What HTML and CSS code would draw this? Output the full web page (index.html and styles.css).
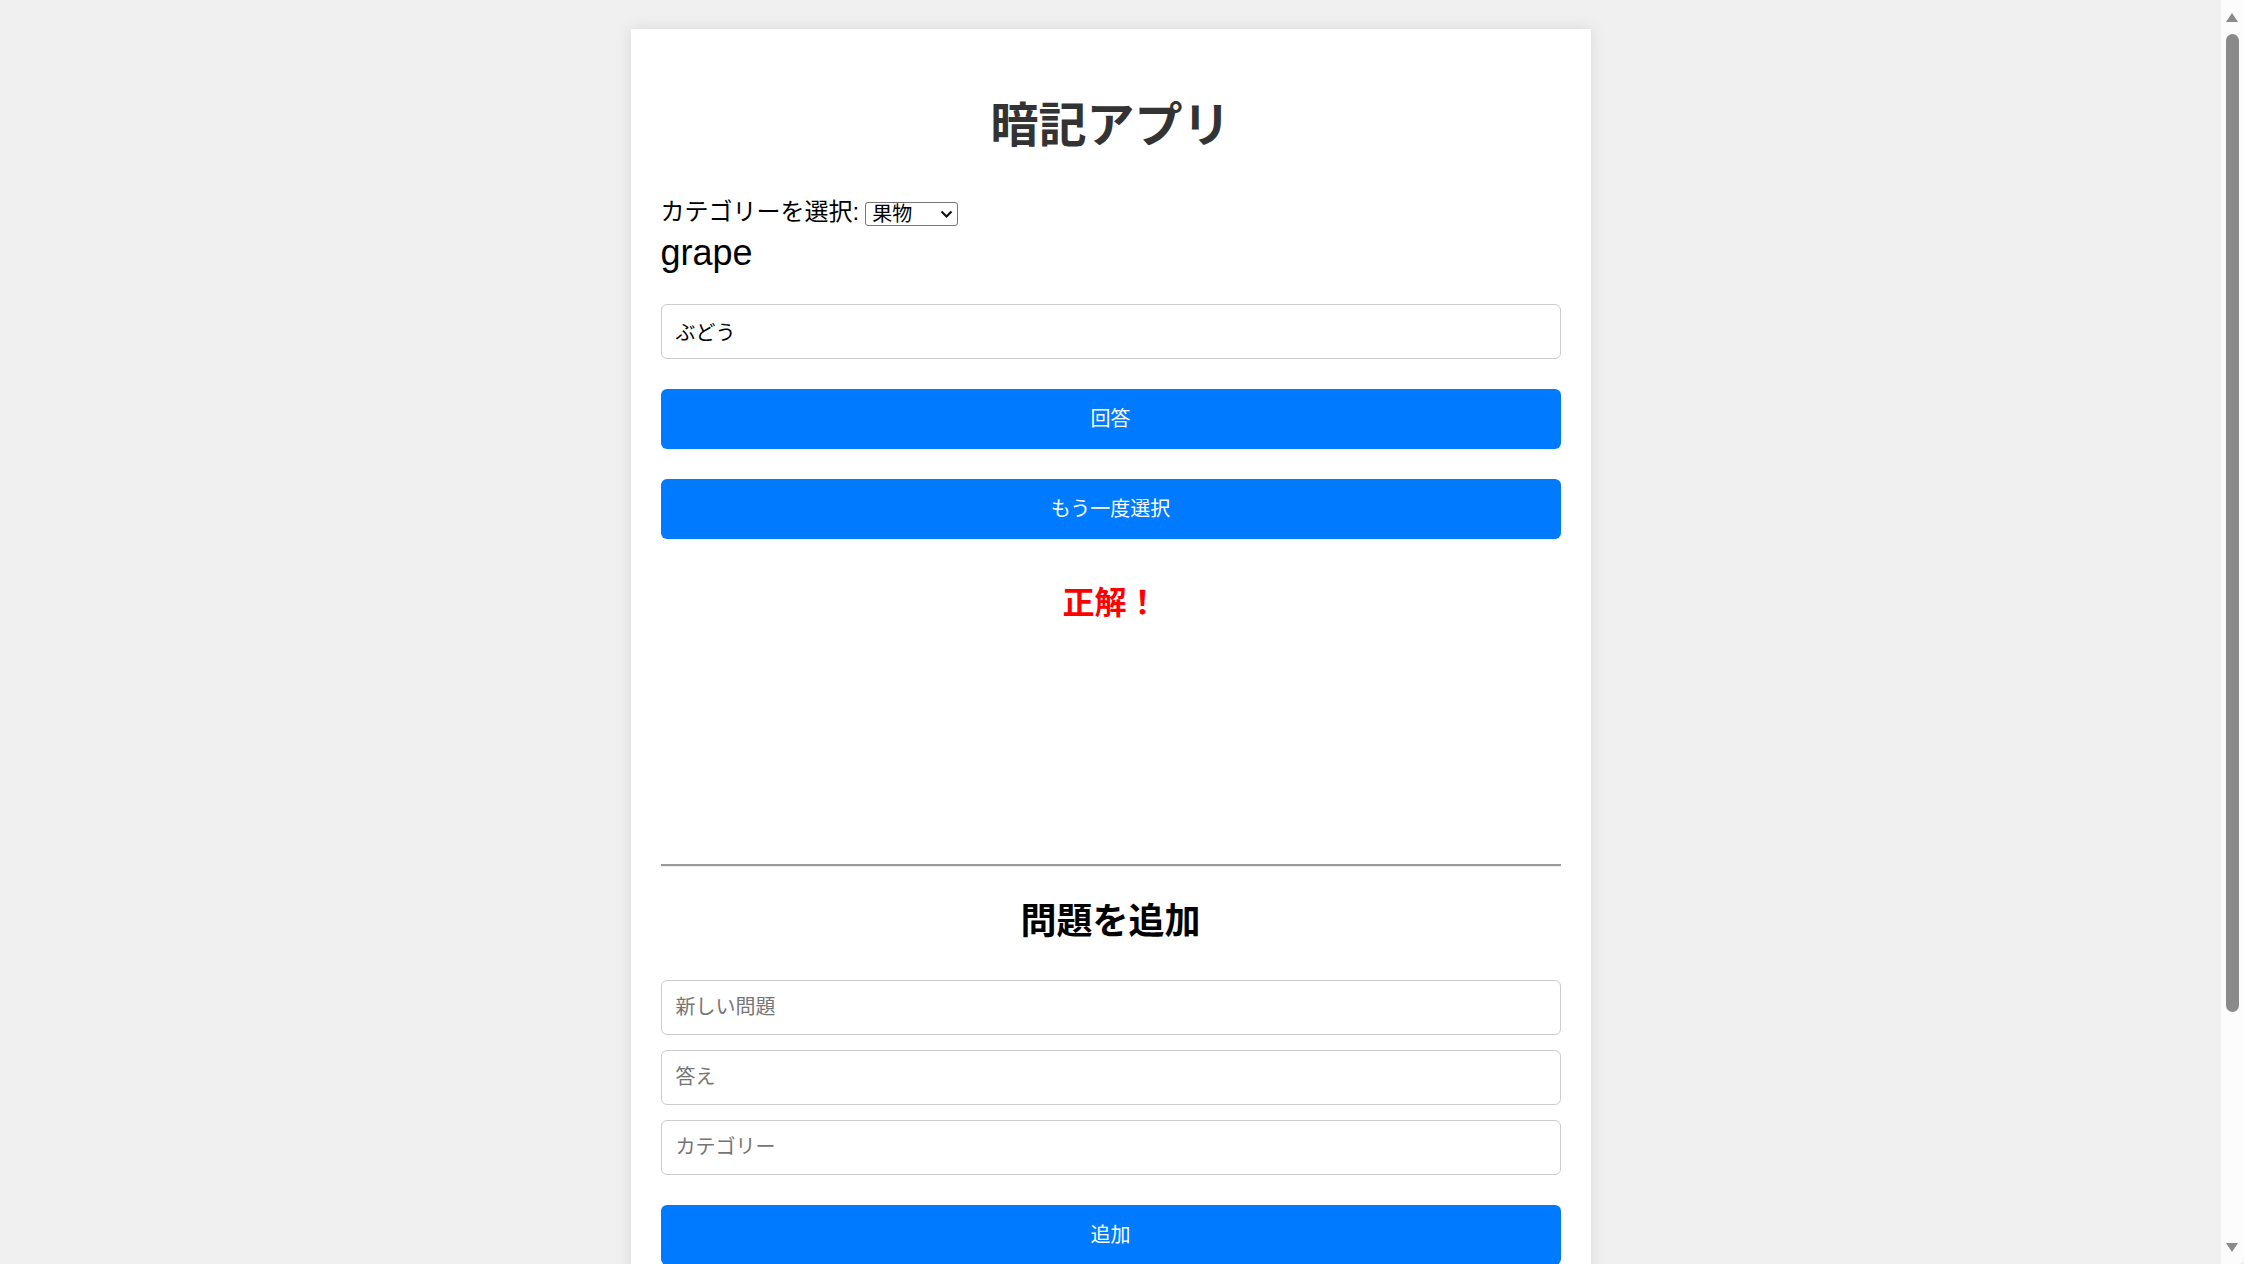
FILE: index.html
```html
<!DOCTYPE html>
<html lang="ja">
<head>
<meta charset="utf-8">
<title>暗記アプリ</title>
<link rel="stylesheet" href="styles.css">
</head>
<body>
<div class="container">
  <h1 class="title">暗記アプリ</h1>
  <div class="category-row">
    <label class="category-label" for="cat">カテゴリーを選択:</label>
    <span class="select-wrap">
      <select id="cat" class="category-select">
        <option>果物</option>
      </select>
      <svg class="select-arrow" width="13" height="9" viewBox="0 0 13 9"><path d="M1.5 1.5 L6.5 6.5 L11.5 1.5" fill="none" stroke="#111" stroke-width="2.2"/></svg>
    </span>
  </div>
  <div class="question">grape</div>
  <input class="field field-answer" type="text" value="ぶどう">
  <button class="btn btn-first">回答</button>
  <button class="btn">もう一度選択</button>
  <div class="result">正解！</div>
  <hr class="divider">
  <h2 class="subtitle">問題を追加</h2>
  <input class="field" type="text" placeholder="新しい問題">
  <input class="field field-gap" type="text" placeholder="答え">
  <input class="field field-gap" type="text" placeholder="カテゴリー">
  <button class="btn btn-add">追加</button>
</div>
<div class="scrollbar">
  <svg class="sb-arrow sb-up" width="14" height="11" viewBox="0 0 14 11"><path d="M7 1 L13 10 L1 10 Z" fill="#8a8a8a"/></svg>
  <div class="sb-thumb"></div>
  <svg class="sb-arrow sb-down" width="14" height="11" viewBox="0 0 14 11"><path d="M1 1 L13 1 L7 10 Z" fill="#8a8a8a"/></svg>
</div>
</body>
</html>
```

FILE: styles.css
```css
* {
  box-sizing: border-box;
}

html, body {
  margin: 0;
  padding: 0;
}

body {
  background: #f0f0f0;
  font-family: "Liberation Sans", "Noto Sans CJK JP", sans-serif;
  color: #000;
  padding-right: 23px;
}

.container {
  width: 960px;
  margin: 29px auto 30px;
  padding: 30px;
  background: #fff;
  box-shadow: 0 0 15px rgba(0, 0, 0, 0.1);
  display: flex;
  flex-direction: column;
}

.title {
  margin: 39px 0 43px;
  font-size: 48px;
  line-height: 56px;
  font-weight: bold;
  color: #333;
  text-align: center;
}

.category-row {
  display: flex;
  align-items: center;
  height: 30px;
  font-size: 24px;
  line-height: 30px;
  color: #000;
}

.category-label {
  margin-right: 6px;
}

.select-wrap {
  position: relative;
  display: inline-block;
  width: 93px;
  height: 24px;
  margin-top: 3px;
}

.category-select {
  -webkit-appearance: none;
  appearance: none;
  display: block;
  width: 93px;
  height: 24px;
  margin: 0;
  padding: 0 0 0 6px;
  font-family: "Liberation Sans", "Noto Sans CJK JP", sans-serif;
  font-size: 20px;
  line-height: 22px;
  border: 1px solid #767676;
  border-radius: 3px;
  background: #fff;
  color: #000;
}

.select-arrow {
  position: absolute;
  right: 5px;
  top: 8px;
  pointer-events: none;
}

.question {
  margin-top: 5px;
  font-size: 36px;
  line-height: 42px;
  color: #000;
}

.field {
  display: block;
  width: 100%;
  padding: 12px 14px;
  border: 1px solid #ccc;
  border-radius: 6px;
  font-family: "Liberation Sans", "Noto Sans CJK JP", sans-serif;
  font-size: 20px;
  line-height: 29px;
  height: 55px;
  color: #000;
  background: #fff;
}

.field::placeholder {
  color: #757575;
}

.field-answer {
  margin-top: 30px;
}

.field-gap {
  margin-top: 15px;
}

.btn {
  display: block;
  width: 100%;
  height: 60px;
  margin-top: 30px;
  padding: 0;
  border: none;
  border-radius: 6px;
  background: #007bff;
  color: #fff;
  font-family: "Liberation Sans", "Noto Sans CJK JP", sans-serif;
  font-size: 20px;
  line-height: 60px;
  cursor: pointer;
}

.result {
  margin-top: 42px;
  font-size: 32px;
  line-height: 44px;
  font-weight: bold;
  color: #f00;
  text-align: center;
}

.divider {
  margin: 239px 0 0;
  height: 0;
  border: none;
  border-top: 2px solid #9a9a9a;
  border-bottom: 1px solid #eee;
}

.subtitle {
  margin: 33px 0 36px;
  font-size: 36px;
  line-height: 44px;
  font-weight: bold;
  color: #000;
  text-align: center;
}

.scrollbar {
  position: fixed;
  top: 0;
  right: 0;
  width: 23px;
  height: 100vh;
  background: #fcfcfc;
  border-bottom-right-radius: 6px;
}

.sb-arrow {
  position: absolute;
  left: 4px;
}

.sb-up {
  top: 12px;
}

.sb-down {
  bottom: 11px;
}

.sb-thumb {
  position: absolute;
  left: 5px;
  top: 34px;
  width: 13px;
  height: 978px;
  background: #8a8a8a;
  border-radius: 7px;
}
```
